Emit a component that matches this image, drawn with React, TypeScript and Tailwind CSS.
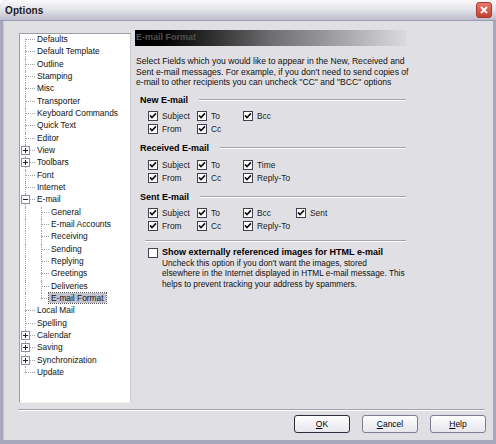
import React from 'react'

const sans = "font-['Liberation_Sans',Arial,sans-serif]"

type TreeItem = { label: string; depth: 0 | 1; expand?: '+' | '-'; last?: boolean; first?: boolean; selected?: boolean }

const tree: TreeItem[] = [
  { label: 'Defaults', depth: 0, first: true },
  { label: 'Default Template', depth: 0 },
  { label: 'Outline', depth: 0 },
  { label: 'Stamping', depth: 0 },
  { label: 'Misc', depth: 0 },
  { label: 'Transporter', depth: 0 },
  { label: 'Keyboard Commands', depth: 0 },
  { label: 'Quick Text', depth: 0 },
  { label: 'Editor', depth: 0 },
  { label: 'View', depth: 0, expand: '+' },
  { label: 'Toolbars', depth: 0, expand: '+' },
  { label: 'Font', depth: 0 },
  { label: 'Internet', depth: 0 },
  { label: 'E-mail', depth: 0, expand: '-' },
  { label: 'General', depth: 1, first: true },
  { label: 'E-mail Accounts', depth: 1 },
  { label: 'Receiving', depth: 1 },
  { label: 'Sending', depth: 1 },
  { label: 'Replying', depth: 1 },
  { label: 'Greetings', depth: 1 },
  { label: 'Deliveries', depth: 1 },
  { label: 'E-mail Format', depth: 1, last: true, selected: true },
  { label: 'Local Mail', depth: 0 },
  { label: 'Spelling', depth: 0 },
  { label: 'Calendar', depth: 0, expand: '+' },
  { label: 'Saving', depth: 0, expand: '+' },
  { label: 'Synchronization', depth: 0, expand: '+' },
  { label: 'Update', depth: 0, last: true },
]

function Connector({ kind, width, lineAt, expand, first, last }: { kind: 'pass' | 'node'; width: string; lineAt: string; expand?: '+' | '-'; first?: boolean; last?: boolean }) {
  return (
    <span className={`relative h-full shrink-0 ${width}`}>
      {kind === 'pass' ? (
        <span className={`absolute top-0 bottom-0 border-l border-dotted border-[#a4a4a4] ${lineAt}`} />
      ) : (
        <>
          <span
            className={`absolute border-l border-dotted border-[#a4a4a4] ${lineAt} ${first ? 'top-[5px]' : 'top-0'} ${last ? 'h-[5px]' : 'bottom-0'}`}
          />
          <span className={`absolute top-[5px] right-[1px] border-t border-dotted border-[#a4a4a4] ${lineAt}`} />
          {expand && (
            <span className="absolute left-[1px] top-[1px] w-[9px] h-[9px] border border-[#8e8e9a] bg-white flex items-center justify-center">
              <span className="absolute w-[5px] h-px bg-[#222]" />
              {expand === '+' && <span className="absolute w-px h-[5px] bg-[#222]" />}
            </span>
          )}
        </>
      )}
    </span>
  )
}

function Tree() {
  return (
    <div className="w-[112px] h-[370px] mt-[3px] bg-white border border-[#9d9da6] border-b-[#f4f3ec] border-r-[#c9c9cf] shrink-0">
      <div className="flex flex-col">
        {tree.map((item) => (
          <div key={item.label} className="flex h-[12.33px] items-start">
            {item.depth === 1 ? (
              <>
                <Connector kind="pass" width="w-[16px]" lineAt="left-[5px]" />
                <Connector kind="node" width="w-[14px]" lineAt="left-[5px]" first={false} last={item.last} />
              </>
            ) : (
              <Connector kind="node" width="w-[16px]" lineAt="left-[5px]" expand={item.expand} first={item.first} last={item.last} />
            )}
            <span
              className={`h-[10px] leading-[10px] text-[8.4px] text-[#111] whitespace-nowrap ${
                item.selected ? 'bg-[#c3c3d0] outline outline-1 outline-dotted outline-[#555] px-[2px] -ml-[1px]' : 'pl-[1px]'
              }`}
            >
              {item.label}
            </span>
          </div>
        ))}
      </div>
    </div>
  )
}

function Check({ checked = true }: { checked?: boolean }) {
  return (
    <span className="w-[10px] h-[10px] border border-[#404050] bg-white flex items-center justify-center shrink-0">
      {checked && (
        <svg width="8" height="8" viewBox="0 0 8 8">
          <path d="M1 3.4 L3 5.6 L7 1.4" stroke="#111" strokeWidth="1.6" fill="none" />
        </svg>
      )}
    </span>
  )
}

function Box({ label }: { label: string }) {
  return (
    <div className="flex items-center gap-[4px] h-[13px]">
      <Check />
      <span className="text-[8.4px] leading-[13px] text-[#222] whitespace-nowrap">{label}</span>
    </div>
  )
}

function SectionTitle({ title, className = '' }: { title: string; className?: string }) {
  return (
    <div className={`flex items-center h-[11px] pl-[5px] ${className}`}>
      <span className="font-bold text-[9px] leading-[11px] whitespace-nowrap">{title}</span>
      <div className="flex-1 ml-[11px] mr-[1px] border-t border-[#a3a3ad] border-b border-b-white" />
    </div>
  )
}

function Grid({ rows }: { rows: string[][] }) {
  return (
    <div className="flex flex-col pl-[13px]">
      {rows.map((row, i) => (
        <div key={i} className="grid grid-cols-[49px_46px_53px_auto]">
          {row.map((l, j) => (l ? <Box key={j} label={l} /> : <span key={j} />))}
        </div>
      ))}
    </div>
  )
}

function Btn({ first, rest, def }: { first: string; rest: string; def?: boolean }) {
  return (
    <button
      className={`w-[56px] h-[18px] rounded-[3px] border bg-gradient-to-b from-white to-[#e6e6ec] text-[8.5px] text-black ${
        def ? 'border-[#2c2c3c]' : 'border-[#7d7d90]'
      }`}
    >
      <span className="underline">{first}</span>
      {rest}
    </button>
  )
}

export default function App() {
  return (
    <div className={`w-[496px] h-[444px] flex flex-col bg-[#a8a7bb] rounded-t-[7px] overflow-hidden ${sans} text-black`}>
      {/* title bar */}
      <div className="h-[21px] flex items-center justify-between pl-[5px] pr-[4px] bg-gradient-to-b from-[#fbfbfc] via-[#e2e2e9] to-[#bdbdcc] border-b border-[#9b9bb0]">
        <span className="font-bold text-[10px] text-[#1b1b22] tracking-[0.1px]">Options</span>
        <span className="w-[16px] h-[16px] rounded-[3px] bg-gradient-to-b from-[#e9796f] to-[#c3402f] border border-[#a83a30] flex items-center justify-center">
          <svg width="10" height="10" viewBox="0 0 10 10">
            <path d="M2 2 L8 8 M8 2 L2 8" stroke="white" strokeWidth="1.8" />
          </svg>
        </span>
      </div>

      {/* dialog body */}
      <div className="flex-1 ml-[3px] mr-[3px] mb-[4px] bg-[#e0dfe3] border-l border-[#c6c6d2] flex flex-col">
        <div className="flex items-start pt-[9px] pl-[15px]">
          <Tree />

          <div className="ml-[4px] w-[272px] flex flex-col">
            <div className="h-[16px] flex items-center pl-[1px] bg-gradient-to-r from-black via-[#6e6e70] to-[#dcdbe0]">
              <span className="font-bold text-[9px] text-[#505050]">E-mail Format</span>
            </div>

            <p className="mt-[10px] text-[8.6px] leading-[10.5px] pl-[1px] text-[#111] whitespace-nowrap">
              Select Fields which you would like to appear in the New, Received and
              <br />
              Sent e-mail messages. For example, if you don't need to send copies of
              <br />
              e-mail to other recipients you can uncheck "CC" and "BCC" options
            </p>

            <SectionTitle title="New E-mail" className="mt-[7px]" />
            <div className="mt-[4px]">
              <Grid rows={[['Subject', 'To', 'Bcc'], ['From', 'Cc']]} />
            </div>

            <SectionTitle title="Received E-mail" className="mt-[7px]" />
            <div className="mt-[5px]">
              <Grid rows={[['Subject', 'To', 'Time'], ['From', 'Cc', 'Reply-To']]} />
            </div>

            <SectionTitle title="Sent E-mail" className="mt-[7px]" />
            <div className="mt-[4px]">
              <Grid rows={[['Subject', 'To', 'Bcc', 'Sent'], ['From', 'Cc', 'Reply-To']]} />
            </div>

            <div className="mt-[7px] ml-[10px] mr-[1px] border-t border-[#a3a3ad] border-b border-b-white" />

            <div className="mt-[5px] pl-[13px] flex items-start gap-[4px]">
              <span className="mt-[1px]">
                <Check checked={false} />
              </span>
              <div className="flex flex-col">
                <span className="font-bold text-[9px] leading-[11px] whitespace-nowrap">
                  Show externally referenced images for HTML e-mail
                </span>
                <span className="text-[8.3px] leading-[10.5px] text-[#111] whitespace-nowrap">
                  Uncheck this option if you don't want the images, stored
                  <br />
                  elsewhere in the Internet displayed in HTML e-mail message. This
                  <br />
                  helps to prevent tracking your address by spammers.
                </span>
              </div>
            </div>
          </div>
        </div>

        <div className="mt-[6px] ml-[14px] mr-[8px] border-t border-[#a3a3ad] border-b border-b-white" />

        <div className="mt-[4px] flex justify-end gap-[12px] pr-[7px]">
          <Btn first="O" rest="K" def />
          <Btn first="C" rest="ancel" />
          <Btn first="H" rest="elp" />
        </div>
      </div>
    </div>
  )
}
